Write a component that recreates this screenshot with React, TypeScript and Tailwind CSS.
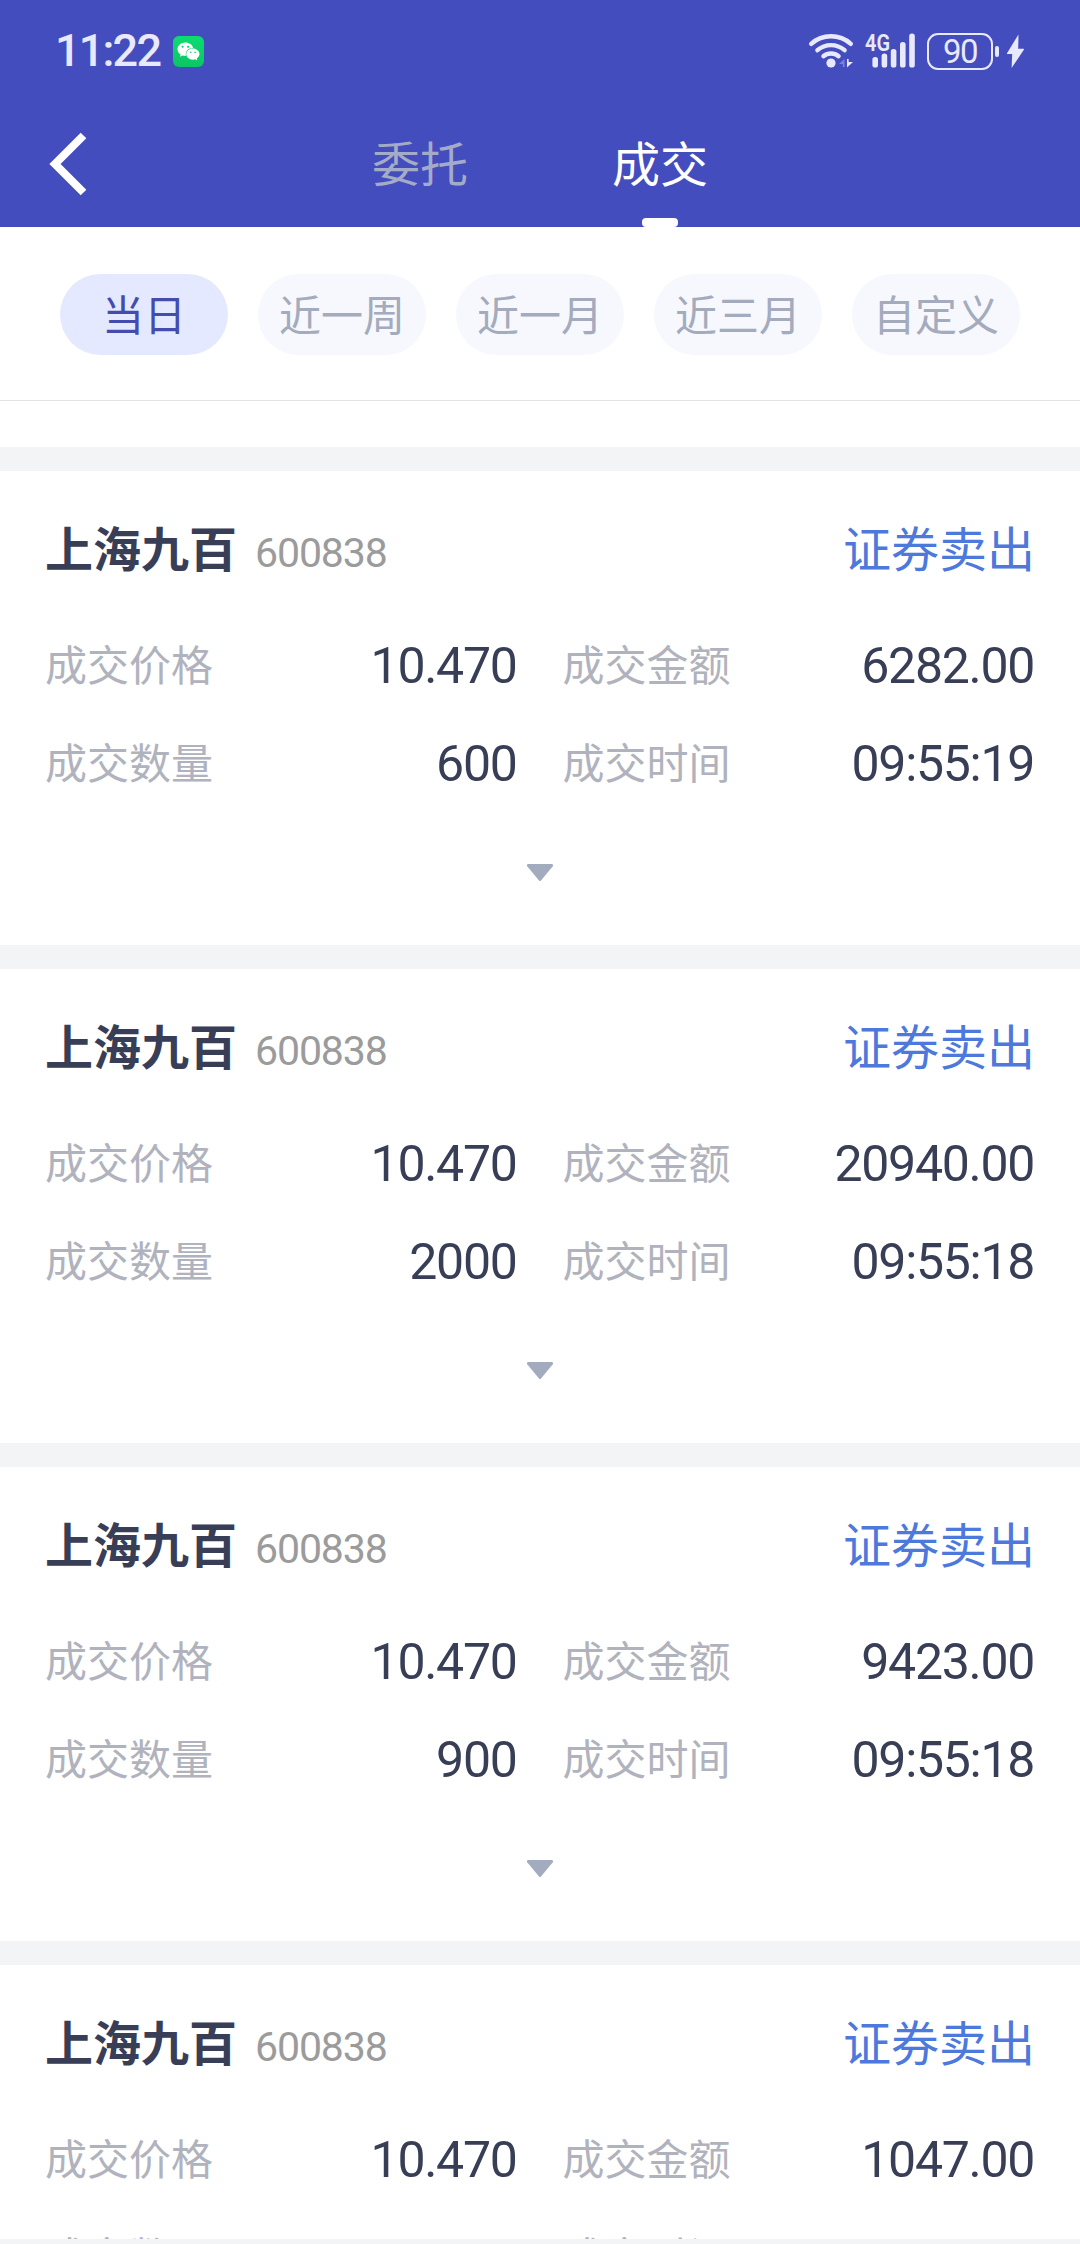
import { FaWeixin } from "react-icons/fa";
import clsx from "clsx";

interface Deal {
  name: string;
  code: string;
  action: string;
  price: string;
  amount: string;
  quantity: string;
  time: string;
}

const tabs = ["委托", "成交"];
const ranges = ["当日", "近一周", "近一月", "近三月", "自定义"];

const deals: Deal[] = [
  {
    name: "上海九百",
    code: "600838",
    action: "证券卖出",
    price: "10.470",
    amount: "6282.00",
    quantity: "600",
    time: "09:55:19",
  },
  {
    name: "上海九百",
    code: "600838",
    action: "证券卖出",
    price: "10.470",
    amount: "20940.00",
    quantity: "2000",
    time: "09:55:18",
  },
  {
    name: "上海九百",
    code: "600838",
    action: "证券卖出",
    price: "10.470",
    amount: "9423.00",
    quantity: "900",
    time: "09:55:18",
  },
  {
    name: "上海九百",
    code: "600838",
    action: "证券卖出",
    price: "10.470",
    amount: "1047.00",
    quantity: "100",
    time: "09:55:18",
  },
];

function WifiIcon() {
  return (
    <svg width="46" height="38" viewBox="0 0 46 38" fill="none">
      <g stroke="#e9e9fd" strokeWidth="4.4" strokeLinecap="round">
        <path d="M3.2 11.8C14.5 1.8 31.5 1.8 42.8 11.8" />
        <path d="M9.4 18.2C17.3 11.4 28.7 11.4 36.6 18.2" />
        <path d="M15.4 24.2C19.8 20.6 26.2 20.6 30.6 24.2" />
      </g>
      <circle cx="23" cy="31" r="4.6" fill="#e9e9fd" />
      <path d="M31 32L36.5 27V35H34.8V32Z" fill="#7d82dc" />
      <path d="M39 27H40.6V30H45L39 35.6Z" fill="#e9e9fd" />
    </svg>
  );
}

function SignalIcon() {
  return (
    <svg width="52" height="38" viewBox="0 0 52 38">
      <text
        x="1"
        y="18.6"
        fontFamily="Roboto"
        fontSize="23"
        fontWeight="600"
        textLength="25"
        lengthAdjust="spacingAndGlyphs"
        fill="#e9e9fd"
      >
        4G
      </text>
      <g fill="#e9e9fd">
        <rect x="8.4" y="25" width="5.6" height="10.5" rx="2.6" />
        <rect x="17.6" y="21.4" width="5.6" height="14.1" rx="2.6" />
        <rect x="26.8" y="17" width="5.6" height="18.5" rx="2.6" />
        <rect x="36" y="10" width="5.6" height="25.5" rx="2.6" />
        <rect x="45.2" y="1.6" width="5.6" height="33.9" rx="2.6" />
      </g>
    </svg>
  );
}

function StatusBar() {
  return (
    <div className="flex h-[102px] items-center justify-between pl-[55px] pr-[55px] text-[#e9e9fd]">
      <div className="flex items-center gap-[13px]">
        <span className="w-[105px] whitespace-nowrap text-[45px] font-medium leading-[60px] tracking-[-1.8px]">
          11:22
        </span>
        <span className="flex h-[31px] w-[31px] items-center justify-center rounded-[6px] bg-gradient-to-b from-[#0cdc70] to-[#0cc566]">
          <FaWeixin className="text-[23px] text-white" />
        </span>
      </div>
      <div className="flex items-center">
        <WifiIcon />
        <div className="ml-[10px]">
          <SignalIcon />
        </div>
        <div className="ml-[11px] flex h-[37px] w-[66px] items-center justify-center rounded-[11px] border-[2.5px] border-[#e9e9fd] text-[33px] leading-none tracking-[-1.5px]">
          90
        </div>
        <div className="ml-[2px] h-[11px] w-[4px] rounded-full bg-[#e9e9fd]" />
        <svg className="ml-[7px]" width="19" height="35" viewBox="0 0 19 35">
          <path
            d="M12.5 0.5L1 19.2Q0.6 20 1.4 20H6.2L5.6 34L18 15.6Q18.4 14.8 17.6 14.8H12.2Z"
            fill="#e9e9fd"
          />
        </svg>
      </div>
    </div>
  );
}

function NavBar() {
  return (
    <div className="grid h-[125px] grid-cols-[300px_240px_240px_300px]">
      <button className="flex items-center pb-px pl-[48px]">
        <svg width="40" height="64" viewBox="0 0 40 64" fill="none">
          <path d="M35.5 3.5L7 32L35.5 60.5" stroke="#fff" strokeWidth="8" />
        </svg>
      </button>
      {tabs.map((tab, i) => (
        <button
          key={tab}
          className={clsx(
            "relative pt-[2px] text-center text-[48px] leading-[60px]",
            i === 1 ? "text-white" : "text-[#a3abc6]"
          )}
        >
          {tab}
          {i === 1 && (
            <span className="absolute bottom-0 left-1/2 h-[9px] w-[36px] -translate-x-1/2 rounded-[4px] bg-white" />
          )}
        </button>
      ))}
    </div>
  );
}

function Field({ label, value }: { label: string; value: string }) {
  return (
    <div className="flex items-center justify-between">
      <span className="text-[42px] text-[#b0b3bd]">{label}</span>
      <span className="mr-[1px] pb-[2px] text-[50px] tracking-[-1.3px] text-[#383e56]">
        {value}
      </span>
    </div>
  );
}

function DealCard({ deal }: { deal: Deal }) {
  return (
    <div className="h-[474px] shrink-0 bg-white px-[45px] pt-[45px]">
      <div className="flex h-[70px] items-center justify-between">
        <div className="flex items-center gap-[18px]">
          <span className="text-[48px] font-bold text-[#383e56]">{deal.name}</span>
          <span className="pt-[4px] text-[41px] tracking-[-1.1px] text-[#9b9b9b]">
            {deal.code}
          </span>
        </div>
        <span className="text-[48px] text-[#4d78dc]">{deal.action}</span>
      </div>
      <div className="mt-[32px] grid auto-rows-[98px] grid-cols-2 gap-x-[45px]">
        <Field label="成交价格" value={deal.price} />
        <Field label="成交金额" value={deal.amount} />
        <Field label="成交数量" value={deal.quantity} />
        <Field label="成交时间" value={deal.time} />
      </div>
      <div className="mt-[50px] flex justify-center">
        <svg width="28" height="18" viewBox="0 0 28 18">
          <path
            d="M2 0H26Q27.8 0.6 26.8 2.2L15 16.4Q14 17.4 13 16.4L1.2 2.2Q0.2 0.6 2 0Z"
            fill="#a3abbf"
          />
        </svg>
      </div>
    </div>
  );
}

export default function App() {
  return (
    <div className="flex h-[2244px] w-[1080px] flex-col overflow-hidden bg-[#f3f4f6] font-[Roboto,'Noto_Sans_CJK_SC',sans-serif] leading-none">
      <header className="shrink-0 bg-[#444dbe]">
        <StatusBar />
        <NavBar />
      </header>
      <div className="flex h-[174px] shrink-0 items-center gap-[30px] border-b border-[#e2e3e5] bg-white px-[60px] pt-[2px]">
        {ranges.map((range, i) => (
          <button
            key={range}
            className={clsx(
              "h-[81px] flex-1 rounded-full pt-[4px] text-[42px]",
              i === 0 ? "bg-[#e5e9ff] text-[#444dae]" : "bg-[#f6f8fd] text-[#a3abbd]"
            )}
          >
            {range}
          </button>
        ))}
      </div>
      <div className="h-[46px] shrink-0 bg-white" />
      {/* The list is cut off just above the bottom edge */}
      <div className="mb-[5px] flex min-h-0 flex-1 flex-col gap-[24px] overflow-hidden pt-[24px]">
        {deals.map((deal, i) => (
          <DealCard key={i} deal={deal} />
        ))}
      </div>
    </div>
  );
}
